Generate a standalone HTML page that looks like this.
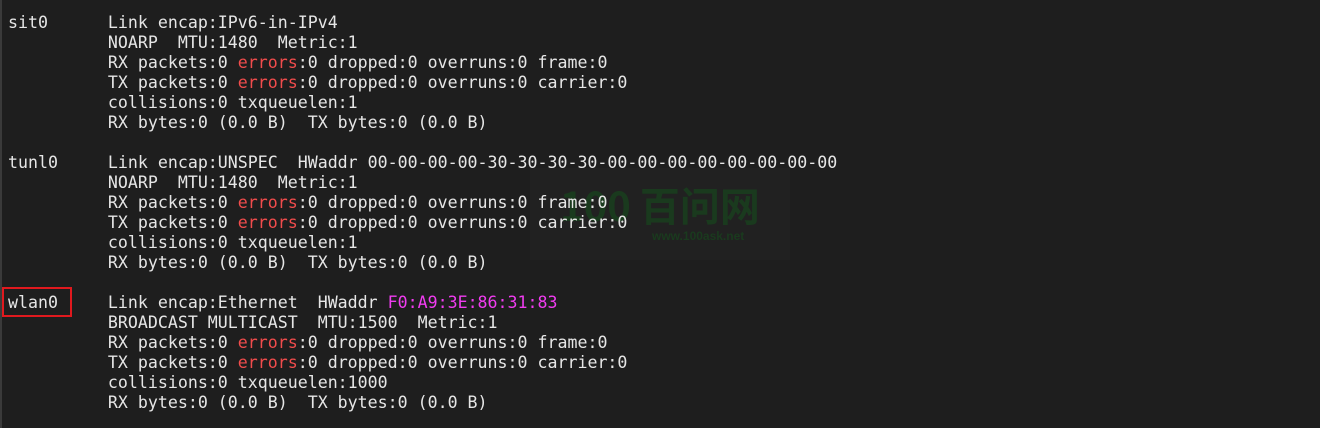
<!DOCTYPE html>
<html><head><meta charset="utf-8"><style>
html,body{margin:0;padding:0;background:#1e1e1e;width:1320px;height:428px;overflow:hidden;position:relative}
.bar{position:absolute;left:0;top:0;width:2px;height:428px;background:#3a3a3a}
pre{position:absolute;left:8px;top:13px;margin:0;font-family:"DejaVu Sans Mono","Liberation Mono",monospace;font-size:16.6px;line-height:20px;color:#e6e6e6;letter-spacing:0}
.r{color:#f14c4c}.m{color:#f03cf0}
.wm{position:absolute;left:530px;top:168px;width:260px;height:92px;background:#212121}
.wmt{position:absolute;left:560px;top:182px;font-family:"Noto Sans CJK SC",sans-serif;font-size:40px;line-height:44px;color:#1a3a1e;font-weight:bold}
.wms{position:absolute;left:652px;top:229px;font-family:"Liberation Sans",sans-serif;font-size:12px;font-weight:bold;color:#1a3a1e}
.box{position:absolute;left:2px;top:287px;width:66px;height:26px;border:2px solid #e0191e}
</style></head><body>
<div class="bar"></div>
<div class="wm"></div>
<div class="wmt">100 百问网</div>
<div class="wms">www.100ask.net</div>
<pre>sit0      Link encap:IPv6-in-IPv4
          NOARP  MTU:1480  Metric:1
          RX packets:0 <span class="r">errors</span>:0 dropped:0 overruns:0 frame:0
          TX packets:0 <span class="r">errors</span>:0 dropped:0 overruns:0 carrier:0
          collisions:0 txqueuelen:1
          RX bytes:0 (0.0 B)  TX bytes:0 (0.0 B)

tunl0     Link encap:UNSPEC  HWaddr 00-00-00-00-30-30-30-30-00-00-00-00-00-00-00-00
          NOARP  MTU:1480  Metric:1
          RX packets:0 <span class="r">errors</span>:0 dropped:0 overruns:0 frame:0
          TX packets:0 <span class="r">errors</span>:0 dropped:0 overruns:0 carrier:0
          collisions:0 txqueuelen:1
          RX bytes:0 (0.0 B)  TX bytes:0 (0.0 B)

wlan0     Link encap:Ethernet  HWaddr <span class="m">F0:A9:3E:86:31:83</span>
          BROADCAST MULTICAST  MTU:1500  Metric:1
          RX packets:0 <span class="r">errors</span>:0 dropped:0 overruns:0 frame:0
          TX packets:0 <span class="r">errors</span>:0 dropped:0 overruns:0 carrier:0
          collisions:0 txqueuelen:1000
          RX bytes:0 (0.0 B)  TX bytes:0 (0.0 B)</pre>
<div class="box"></div>
</body></html>
